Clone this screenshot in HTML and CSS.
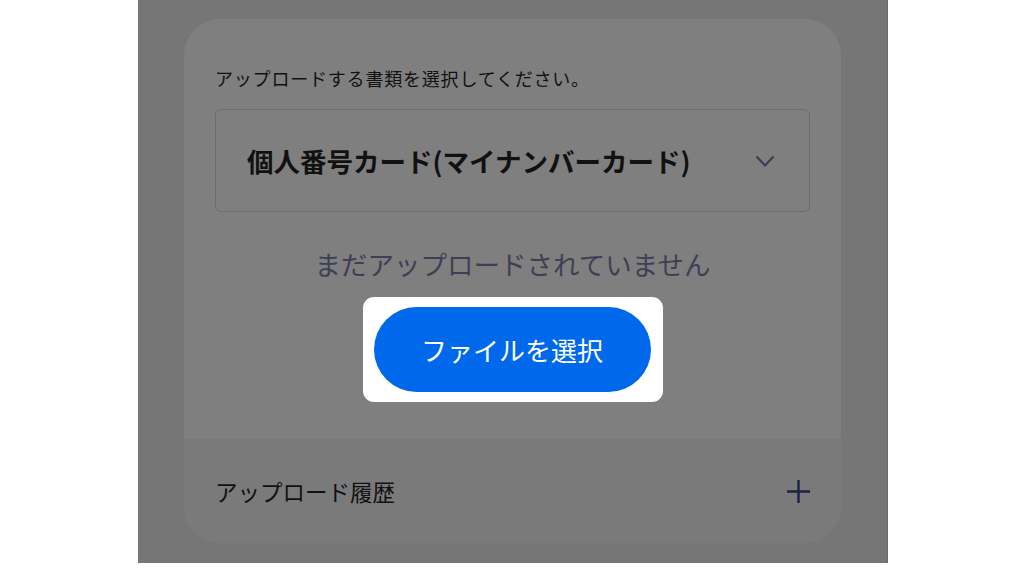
FILE: index.html
```html
<!DOCTYPE html>
<html lang="ja">
<head>
  <meta charset="UTF-8">
  <meta name="viewport" content="width=device-width, initial-scale=1.0">
  <title>書類アップロード</title>
  <link rel="stylesheet" href="styles.css">
</head>
<body>
  <div class="screen">
    <div class="card">

      <!-- 書類の選択 -->
      <div class="upload-section">
        <p class="upload-label">アップロードする書類を選択してください。</p>

        <div class="doc-select">
          <span class="doc-name">個人番号カード(マイナンバーカード)</span>
          <svg class="chevron" width="20" height="13" viewBox="0 0 20 13">
            <path d="M1.5 1.5 L10 10.5 L18.5 1.5" fill="none" stroke="#3a3c55" stroke-width="2.2"/>
          </svg>
        </div>

        <p class="empty-text">まだアップロードされていません</p>

        <div class="spotlight">
          <button class="file-button">ファイルを選択</button>
        </div>
      </div>

      <!-- 履歴 -->
      <div class="history-row">
        <span class="history-title">アップロード履歴</span>
        <svg class="plus" width="23" height="23" viewBox="0 0 23 23">
          <path d="M11.5 0 V23 M0 11.5 H23" fill="none" stroke="#1b2147" stroke-width="2.4"/>
        </svg>
      </div>

    </div>
  </div>
</body>
</html>
```

FILE: styles.css
```css
body {
  margin: 0;
  background-color: #ffffff;
  font-family: "Noto Sans CJK JP", "Noto Sans", sans-serif;
}

.screen {
  width: 750px;
  height: 563px;
  margin-left: 138px;
  padding: 19px 46px 0;
  box-sizing: border-box;
  background-color: #767676;
  border-right: 1px solid #6a6a6a;
  overflow: hidden;
}

.card {
  background-color: #7f7f7f;
  border-radius: 36px;
  overflow: hidden;
}

.upload-section {
  display: flex;
  flex-direction: column;
  align-items: center;
  padding: 46px 31px 37px;
}

.upload-label {
  align-self: stretch;
  margin: 0 0 18px;
  font-size: 18px;
  letter-spacing: 0.8px;
  line-height: 26px;
  color: #111111;
}

.doc-select {
  align-self: stretch;
  display: flex;
  justify-content: space-between;
  align-items: center;
  height: 103px;
  padding: 0 34px 0 31px;
  box-sizing: border-box;
  border: 1.5px solid #696b78;
  border-radius: 6px;
}

.doc-name {
  font-size: 26.5px;
  font-weight: bold;
  color: #111111;
}

.chevron {
  margin-top: 2px;
}

.empty-text {
  margin: 34px 0 15px;
  font-size: 26.5px;
  line-height: 36px;
  color: #3d4055;
}

.spotlight {
  padding: 10px 12px 10px 11px;
  background-color: #ffffff;
  border-radius: 11px;
}

.file-button {
  display: block;
  width: 277px;
  height: 85px;
  border: none;
  border-radius: 43px;
  background-color: #0068ea;
  color: #ffffff;
  font-family: inherit;
  font-size: 26px;
  cursor: pointer;
}

.history-row {
  display: flex;
  justify-content: space-between;
  align-items: center;
  height: 104px;
  padding: 0 31px;
  background-color: #7a7a7a;
}

.history-title {
  font-size: 22.5px;
  color: #111111;
}
```
